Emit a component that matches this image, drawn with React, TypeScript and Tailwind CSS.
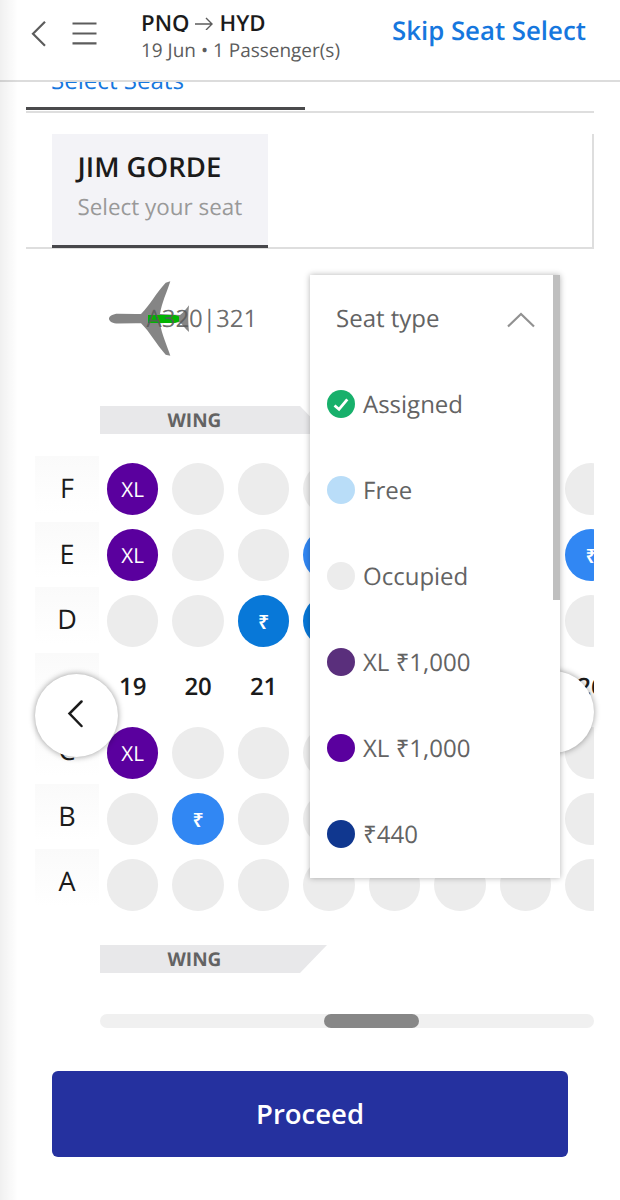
import React from "react";

const letters = ["F", "E", "D", "", "C", "B", "A"];

// one string per row, columns 19 - 26
// x = XL, l = light blue, b = blue, "." = occupied
const rows = [
  "x.......",
  "x..l...l",
  "..bb....",
  "#",
  "x.......",
  ".l......",
  "........",
];

const columns = ["19", "20", "21", "", "", "", "", "26"];

const seatTypes = [
  { label: "Assigned", color: "bg-[#17b06b]", check: true },
  { label: "Free", color: "bg-[#b9ddf8]" },
  { label: "Occupied", color: "bg-[#ececec]" },
  { label: "XL ₹1,000", color: "bg-[#5a2f7c]" },
  { label: "XL ₹1,000", color: "bg-[#5a009e]" },
  { label: "₹440", color: "bg-[#10378f]" },
];

const Seat = ({ type }: { type: string }) => {
  if (type === "x") {
    return (
      <div className="flex size-[51.700px] items-center justify-center rounded-full bg-[#5a009e] pt-[2px] text-[20.600px] text-white">
        XL
      </div>
    );
  }
  if (type === "l" || type === "b") {
    return (
      <div
        className={`flex size-[51.700px] items-center justify-center rounded-full pt-[2px] text-[19.600px] font-semibold text-white ${
          type === "l" ? "bg-[#3187f3]" : "bg-[#0878d8]"
        }`}
      >
        ₹
      </div>
    );
  }
  return <div className="size-[51.700px] rounded-full bg-[#ececec]" />;
};

const Header = () => (
  <header className="relative z-10 flex h-[82px] border-b-2 border-[#dcdcdc] bg-white">
    <svg
      className="ml-[30px] mt-[20px] h-[28px] w-[18px] shrink-0"
      viewBox="0 0 18 28"
      fill="none"
      stroke="#5c5c5c"
      strokeWidth="2.2"
    >
      <path d="M15 1.8 3 13.8 15 25.8" />
    </svg>
    <svg
      className="ml-6 mt-[20px] h-[28px] w-[25px] shrink-0"
      viewBox="0 0 25 28"
      stroke="#5c5c5c"
      strokeWidth="2.2"
    >
      <path d="M.5 3.5h24M.5 13.5h24M.5 23.3h24" />
    </svg>
    <div className="ml-[44px] w-[240px] whitespace-nowrap pt-[7px]">
      <div className="flex h-[25px] items-start overflow-hidden text-[22.200px] font-semibold leading-[31px] text-[#1b1b1b]">
        <span>PNQ</span>
        <svg
          className="mx-[5px] mt-[9px] h-[14px] w-[20px]"
          viewBox="0 0 20 14"
          fill="none"
          stroke="#5c5c5c"
          strokeWidth="1.4"
        >
          <path d="M1 8h17M12 2l6 6-6 6" />
        </svg>
        <span>HYD</span>
      </div>
      <div className="mt-[4px] text-[18.980px] leading-[28px] text-[#5c5c5c]">
        19 Jun • 1 Passenger(s)
      </div>
    </div>
    <div className="ml-[10px] whitespace-nowrap pl-px pt-[10px] text-[25.800px] font-semibold leading-[40px] text-[#1677de]">
      Skip Seat Select
    </div>
  </header>
);

const Plane = () => (
  <svg className="h-[76px] w-[84px]" viewBox="0 0 84 76">
    <path
      fill="#858585"
      d="M1 38.7c0-2.6 4-5 9-5l18 .3h5C42 25 48 13 57.700 2.700l4.600-1.400C59 12 54 22 52 34l20 1c4-3 6-6 9-9.700h-.0c-1 9-1 18 0 26.700-4-3-6-7-9-9.700l-20 1c2 12 7 22 10.300 32.400l-4.600-1C48 64 42 52 33 43.300h-5l-18 .3c-5 0-9-2.400-9-4.900z"
    />
    <path fill="#02b402" d="M40 35h27l4 1.500v5l-4 1.500H40z" />
  </svg>
);

const SeatTypeMenu = () => (
  <div className="absolute left-[310px] top-[275px] z-20 flex h-[603px] w-[250px] bg-white text-[24px] text-[#636363] shadow-[0_0_6px_rgba(0,0,0,0.3)]">
    <div className="flex-1">
      <div className="flex h-[87px] items-center justify-between pl-[26px] pr-[18px]">
        <span>Seat type</span>
        <svg
          className="mt-[3px] h-[18px] w-[28px]"
          viewBox="0 0 28 18"
          fill="none"
          stroke="#919191"
          strokeWidth="2.2"
        >
          <path d="M1 15.500 14 3l13 12.500" />
        </svg>
      </div>
      {seatTypes.map((seat, index) => (
        <div key={index} className="flex h-[86px] items-center gap-2 pl-[17px]">
          <div className={`-mt-[2px] size-7 rounded-full ${seat.color}`}>
            {seat.check && (
              <svg
                className="size-7"
                viewBox="0 0 28 28"
                fill="none"
                stroke="#fff"
                strokeWidth="2.8"
              >
                <path d="M7.500 15.500 12 19.300 20.300 9.300" />
              </svg>
            )}
          </div>
          <span>{seat.label}</span>
        </div>
      ))}
    </div>
    <div className="h-[325px] w-[7px] bg-[#bfbfbf]" />
  </div>
);

const SeatMap = () => (
  <div className="relative ml-[35px] mt-[22px] flex w-[559px]">
    <div className="w-[64px] shrink-0">
      {letters.map((letter, index) => (
        <div
          key={index}
          className="mb-[8.500px] flex h-[57px] items-center justify-center bg-gradient-to-b from-[#fafafa] to-white pt-[8px] text-[27px] text-[#1b1b1b]"
        >
          {letter}
        </div>
      ))}
    </div>
    <div className="flex-1 overflow-hidden pl-[7.800px]">
      {rows.map((row, index) => (
        <div key={index} className="flex h-[66px] w-max items-center">
          {row === "#"
            ? columns.map((column, columnIndex) => (
                <div
                  key={columnIndex}
                  className="mr-[13.800px] w-[51.700px] text-center text-[24px] font-semibold text-[#1b1b1b]"
                >
                  {column}
                </div>
              ))
            : row.split("").map((type, seatIndex) => (
                <div key={seatIndex} className="mr-[13.800px]">
                  <Seat type={type} />
                </div>
              ))}
        </div>
      ))}
    </div>
    <div className="absolute -left-[.5px] top-[217.500px] flex size-[83px] items-center justify-center rounded-full bg-white shadow-[0_0_6px_rgba(0,0,0,0.4)]">
      <svg
        className="-mt-[2px] h-[28px] w-[18px]"
        viewBox="0 0 18 28"
        fill="none"
        stroke="#1b1b1b"
        strokeWidth="2.500"
        strokeLinecap="round"
      >
        <path d="M14.500 1.500 2.500 13.500l12 12.500" />
      </svg>
    </div>
    <div className="absolute right-0 top-[215px] size-[82px] rounded-full bg-white shadow-[0_0_6px_rgba(0,0,0,0.4)]" />
  </div>
);

const Wing = ({ flip = false }: { flip?: boolean }) => (
  <div
    className={`ml-[100px] flex h-[28px] w-[227px] items-center bg-[#e8e8ea] pl-[67.500px] pt-px text-[19px] font-bold text-[#636363] ${
      flip
        ? "[clip-path:polygon(0_0,100%_0,200px_100%,0_100%)]"
        : "[clip-path:polygon(0_0,200px_0,100%_100%,0_100%)]"
    }`}
  >
    WING
  </div>
);

export default function App() {
  return (
    <div className="relative h-[1200px] w-[620px] overflow-hidden bg-white font-['Open_Sans','Noto_Sans',sans-serif] [text-rendering:geometricPrecision]">
      <Header />

      <div className="mx-[26px] h-[31px] overflow-hidden border-b-2 border-[#dedede]">
        <div className="flex h-[28px] w-[279px] border-b-[3px] border-[#4a4a4c] pl-[25px]">
          <div className="-mt-[19px] text-[24.100px] leading-[36px] text-[#1677de]">
            Select Seats
          </div>
        </div>
      </div>

      <div className="ml-[26px] mt-[21px] h-[115px] w-[568px] border-b-2 border-r-2 border-[#dedede] pl-[26px]">
        <div className="h-[114px] w-[216px] border-b-[3px] border-[#47474b] bg-[#f3f3f7] pl-[25.500px] pt-[14px]">
          <div className="text-[27.500px] font-semibold leading-[40px] text-[#1b1b1b]">
            JIM GORDE
          </div>
          <div className="text-[22.400px] leading-[38px] text-[#999999]">
            Select your seat
          </div>
        </div>
      </div>

      <div className="ml-[108px] mt-[31px] flex h-[78px] items-start">
        <Plane />
        <span className="relative -ml-[45.500px] mt-[21px] text-[24px] leading-[36px] text-[#5a5a5a]/90">
          A320|321
        </span>
      </div>

      <div className="mt-[48px]">
        <Wing />
      </div>
      <SeatMap />
      <div className="mt-[27px]">
        <Wing flip />
      </div>

      <div className="ml-[100px] mt-[41px] h-[14px] w-[494px] rounded-full bg-[#f0f0f0]">
        <div className="ml-[224px] h-[14px] w-[95px] rounded-full bg-[#878787]" />
      </div>

      <button className="ml-[52px] mt-[43px] block h-[86px] w-[516px] rounded-[6px] bg-[#25319f] text-[27.500px] font-semibold text-white">
        Proceed
      </button>

      <SeatTypeMenu />
      <div className="pointer-events-none absolute inset-y-0 left-0 z-30 w-[18px] bg-gradient-to-r from-black/6 to-transparent" />
    </div>
  );
}
